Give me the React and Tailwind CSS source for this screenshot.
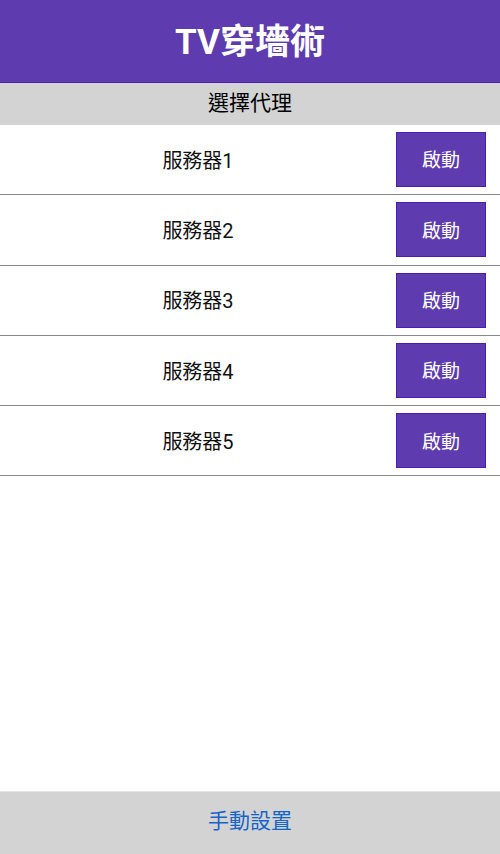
import React from 'react';

const servers = ['服務器1', '服務器2', '服務器3', '服務器4', '服務器5'];

function App() {
  return (
    <div
      className="h-[854px] w-full flex flex-col bg-white"
      style={{ fontFamily: 'Roboto, "Noto Sans CJK TC", sans-serif' }}
    >
      <div className="h-[83px] shrink-0 flex items-center justify-center bg-[#5e3bae] border-b border-[#4a1cb4]">
        <h1 className="text-[35px] font-bold text-white leading-none mt-[2px]">TV穿墻術</h1>
      </div>

      <div className="h-[42px] shrink-0 flex items-center justify-center bg-[#d3d3d3] text-[21px] text-black">
        選擇代理
      </div>

      <div className="flex flex-col">
        {servers.map((name) => (
          <div key={name} className="h-[70.3px] flex items-center border-b border-[#8a8a8a] pr-[14px]">
            <div className="flex-1 text-center text-[20px] text-[#111] pt-[2px]">{name}</div>
            <button className="w-[90px] h-[55px] bg-[#5e3bae] border border-[#4a1cb4] text-white text-[19px] pt-[4px]">
              啟動
            </button>
          </div>
        ))}
      </div>

      <div className="flex-1" />

      <div className="h-[63px] shrink-0 flex items-center justify-center bg-[#d3d3d3] border-t border-[#e4e4e4]">
        <span className="text-[21px] text-[#1565c8] -mt-[3px]">手動設置</span>
      </div>
    </div>
  );
}

export default App;
